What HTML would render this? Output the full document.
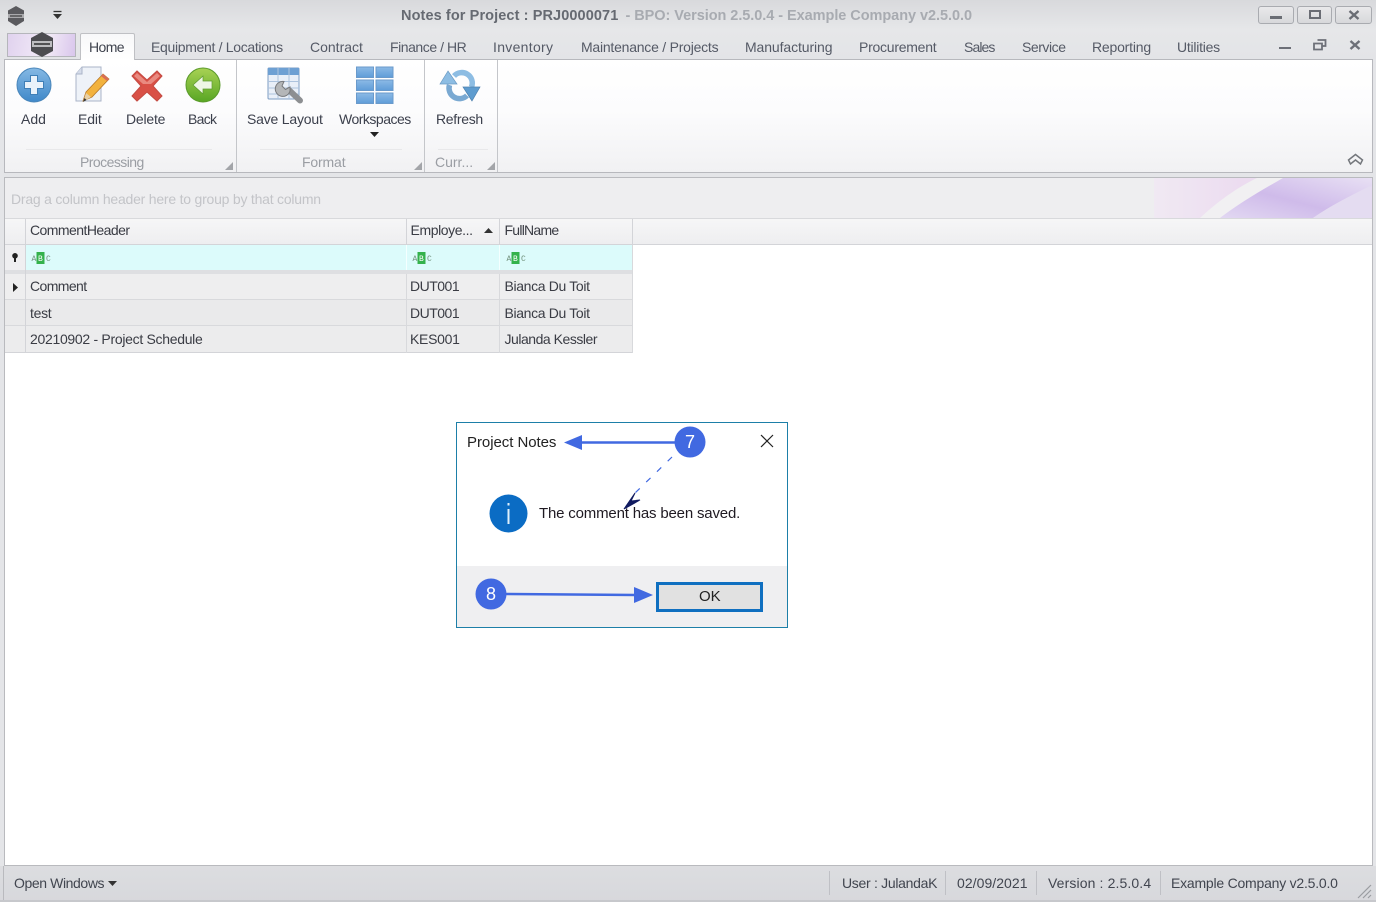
<!DOCTYPE html>
<html lang="en"><head><meta charset="utf-8"><title>Notes for Project</title>
<style>
html,body{margin:0;padding:0;width:1376px;height:902px;overflow:hidden;background:#e4e5e8}
body{position:relative;font-family:"Liberation Sans",sans-serif;font-size:14px;color:#3f4450}
.a{position:absolute}
.t{position:absolute;white-space:nowrap;line-height:18px;height:18px;filter:blur(.25px)}
.tab{color:#555a66;top:38px}
.rb{color:#3c404c;top:110px}
.gl{color:#9a9da3;top:153px}
.c{color:#3a3c44}
svg{position:absolute;overflow:visible}
.sep{position:absolute;background:#c4c6ca;width:1px}
</style></head><body>

<div class="a" style="left:0;top:0;width:1376px;height:59px;background:linear-gradient(#d8d9dc,#e6e7e9 50%,#e3e4e7)"></div>

<!-- app icon -->
<svg style="left:5px;top:5px" width="22" height="22" viewBox="0 0 22 22"><path d="M11 1 19 5.500V16L11 21 3 16V5.500Z" fill="#5a5a5e"/><rect x="3" y="9" width="16" height="4" fill="#a9a9ac"/><path d="M5 11h12" stroke="#3a3a3c" stroke-width="1.200"/></svg>
<svg style="left:52px;top:11px" width="11" height="9" viewBox="0 0 11 9"><path d="M1.500 0.500h8" stroke="#333" stroke-width="1.300"/><path d="M1 3h9L5.500 8Z" fill="#333"/></svg>

<div class="t" style="left:401px;top:7px;font-weight:bold;font-size:14.500px;color:#666a72;letter-spacing:.1px">Notes for Project : PRJ0000071 <span style="color:#a8abb1;font-weight:bold;padding-left:3px;letter-spacing:-.05px">- BPO: Version 2.5.0.4 - Example Company v2.5.0.0</span></div>

<!-- window buttons -->
<div class="a" style="left:1258px;top:6px;width:36px;height:18px;border:1px solid #a9abb0;border-radius:3px;box-sizing:border-box;background:linear-gradient(#e9e9eb,#d7d8db)"></div>
<div class="a" style="left:1297px;top:6px;width:35px;height:18px;border:1px solid #a9abb0;border-radius:3px;box-sizing:border-box;background:linear-gradient(#e9e9eb,#d7d8db)"></div>
<div class="a" style="left:1335px;top:6px;width:37px;height:18px;border:1px solid #a9abb0;border-radius:3px;box-sizing:border-box;background:linear-gradient(#e9e9eb,#d7d8db)"></div>
<div class="a" style="left:1270px;top:16px;width:12px;height:3px;background:#6a6d74"></div>
<div class="a" style="left:1309px;top:10px;width:12px;height:9px;border:2px solid #6a6d74;box-sizing:border-box"></div>
<svg style="left:1348px;top:10px" width="12" height="10" viewBox="0 0 12 10"><path d="M1.500 1 10.500 9M10.500 1 1.500 9" stroke="#6a6d74" stroke-width="2.400"/></svg>

<!-- app menu button -->
<div class="a" style="left:7px;top:33px;width:69px;height:24px;box-sizing:border-box;border:1px solid #b5b6bb;background:linear-gradient(100deg,#e0d2ee,#efe6f6 45%,#f1e9f6 60%,#d9c6ec)"></div>
<svg style="left:29px;top:31px" width="26" height="27" viewBox="0 0 26 27"><path d="M13 1 24 7V20L13 26 2 20V7Z" fill="#4c4c50"/><rect x="3" y="10" width="20" height="6" fill="#bdbdc0"/><path d="M5 13h16" stroke="#2e2e30" stroke-width="1.500"/></svg>

<!-- ribbon -->
<div class="a" style="left:4px;top:59px;width:1369px;height:114px;box-sizing:border-box;border:1px solid #b7b8bd;background:linear-gradient(#fff,#fcfcfd 45%,#f1f1f3)"></div>
<!-- home tab -->
<div class="a" style="left:80px;top:33px;width:55px;height:27px;box-sizing:border-box;border:1px solid #bfc0c4;border-bottom:0;background:linear-gradient(#f8f8f9,#fff);border-radius:2px 2px 0 0"></div>
<div class="t" style="left:89px;top:38px;color:#3f434e;letter-spacing:-.6px">Home</div>
<div class="t tab" style="left:151px;letter-spacing:-.32px">Equipment / Locations</div>
<div class="t tab" style="left:310px">Contract</div>
<div class="t tab" style="left:390px;letter-spacing:-.45px">Finance / HR</div>
<div class="t tab" style="left:493px;letter-spacing:.3px">Inventory</div>
<div class="t tab" style="left:581px;letter-spacing:-.23px">Maintenance / Projects</div>
<div class="t tab" style="left:745px;letter-spacing:-.1px">Manufacturing</div>
<div class="t tab" style="left:859px;letter-spacing:-.25px">Procurement</div>
<div class="t tab" style="left:964px;letter-spacing:-.9px">Sales</div>
<div class="t tab" style="left:1022px;letter-spacing:-.45px">Service</div>
<div class="t tab" style="left:1092px;letter-spacing:-.2px">Reporting</div>
<div class="t tab" style="left:1177px;letter-spacing:-.25px">Utilities</div>

<div class="a" style="left:1279px;top:47px;width:12px;height:2px;background:#6d7078"></div>
<svg style="left:1313px;top:39px" width="14" height="12" viewBox="0 0 14 12"><path d="M4.500 1h8v6h-3M1 4.500h8v6H1Z" fill="none" stroke="#6d7078" stroke-width="1.800"/></svg>
<svg style="left:1349px;top:40px" width="12" height="10" viewBox="0 0 12 10"><path d="M1.500 1 10.500 9M10.500 1 1.500 9" stroke="#6d7078" stroke-width="2.400"/></svg>

<!-- ribbon icons -->
<svg style="left:16px;top:67px" width="36" height="36" viewBox="0 0 36 36"><defs><linearGradient id="gb" x1="0" y1="0" x2="0" y2="1"><stop offset="0" stop-color="#85b9e4"/><stop offset="1" stop-color="#3f88c9"/></linearGradient></defs><circle cx="18" cy="18" r="17" fill="url(#gb)" stroke="#4a86ba"/><path d="M14.500 8.500h7v6h6v7h-6v6h-7v-6h-6v-7h6Z" fill="#e9f2fa" stroke="#3f7fb7"/></svg>

<svg style="left:74px;top:66px" width="36" height="39" viewBox="0 0 36 39"><path d="M8 1H27V35H2V8Z" fill="#eef2f8" stroke="#aab4c8"/><path d="M8 1V8H2" fill="#d5dcea" stroke="#aab4c8"/><path d="M9 35 12 26 29 8 35 13 18 31Z" fill="#f2b23e" stroke="#b7792a" stroke-width=".8"/><path d="M29 8 35 13 33 15 27 10Z" fill="#d96d55"/><path d="M9 36 12 27 17 31Z" fill="#e8d0a5"/><path d="M9 36 10.500 32 12.500 34Z" fill="#333"/></svg>

<svg style="left:130px;top:69px" width="34" height="34" viewBox="0 0 34 34"><path d="M2 7 7 2 17 11 27 2 32 7 23 17 32 27 27 32 17 23 7 32 2 27 11 17Z" fill="#d95046" stroke="#c44a42"/><path d="M4 7 7 4 17 13 27 4 30 7 21 15H13Z" fill="#e98a80"/></svg>

<svg style="left:185px;top:67px" width="36" height="36" viewBox="0 0 36 36"><defs><linearGradient id="gg" x1="0" y1="0" x2="0" y2="1"><stop offset="0" stop-color="#a8d254"/><stop offset="1" stop-color="#58a624"/></linearGradient></defs><circle cx="18" cy="18" r="17" fill="url(#gg)" stroke="#5a9a2b"/><path d="M8 18 18 9V14H27V22H18V27Z" fill="#eef6e4" stroke="#5d9a2f" stroke-width=".7"/></svg>

<svg style="left:267px;top:66px" width="38" height="39" viewBox="0 0 38 39"><rect x="1" y="2" width="31" height="31" rx="1" fill="#e9eff8" stroke="#7d9dc3"/><rect x="1" y="2" width="31" height="7" fill="#6ea0d3"/><path d="M1 15.500H32M1 22H32M1 28H32M11 2V33M22 2V33" stroke="#adc3dd"/><path d="M22 24 33 34.500" stroke="#8d8f92" stroke-width="6" stroke-linecap="round"/><path d="M23 25a7.500 7.500 0 1 1-6-9.500l-2 4.500 3.500 3.500 4.500-2.500z" fill="#b4b6b8" stroke="#77797c"/></svg>

<svg style="left:356px;top:66px" width="38" height="38" viewBox="0 0 38 38"><defs><linearGradient id="wb" x1="0" y1="0" x2="0" y2="1"><stop offset="0" stop-color="#8cbae6"/><stop offset="1" stop-color="#5f9cd8"/></linearGradient></defs><g fill="url(#wb)" stroke="#6a9acb"><rect x=".5" y="1" width="17" height="10.500"/><rect x="20" y="1" width="17" height="10.500"/><rect x=".5" y="14" width="17" height="10.500"/><rect x="20" y="14" width="17" height="10.500"/><rect x=".5" y="27" width="17" height="10.500"/><rect x="20" y="27" width="17" height="10.500"/></g></svg>

<svg style="left:440px;top:69px" width="41" height="34" viewBox="0 0 41 34"><path d="M27 26.500A10.500 10.500 0 0 1 9.500 16" fill="none" stroke="#7aa9d2" stroke-width="5.500"/><path d="M8 2 0 15H17Z" fill="#8dbde3" stroke="#6a9ac4" stroke-width=".7"/><path d="M14 7A10.500 10.500 0 0 1 31.500 18" fill="none" stroke="#8dbde3" stroke-width="5.500"/><path d="M32 32 23 18H40Z" fill="#5e9ccf" stroke="#4f82af" stroke-width=".7"/></svg>

<div class="t rb" style="left:21px">Add</div>
<div class="t rb" style="left:78px;letter-spacing:-.1px">Edit</div>
<div class="t rb" style="left:126px;letter-spacing:-.2px">Delete</div>
<div class="t rb" style="left:188px;letter-spacing:-.7px">Back</div>
<div class="t rb" style="left:247px;letter-spacing:-.2px">Save Layout</div>
<div class="t rb" style="left:339px;letter-spacing:-.5px">Workspaces</div>
<div class="t rb" style="left:436px;letter-spacing:-.3px">Refresh</div>
<svg style="left:370px;top:132px" width="9" height="5" viewBox="0 0 9 5"><path d="M0 0H9L4.500 5Z" fill="#222"/></svg>

<div class="a" style="left:26px;top:149px;width:186px;height:1px;background:#e8e8ea"></div>
<div class="a" style="left:260px;top:149px;width:142px;height:1px;background:#e8e8ea"></div>
<div class="a" style="left:438px;top:149px;width:50px;height:1px;background:#e8e8ea"></div>
<div class="t gl" style="left:80px;letter-spacing:-.55px">Processing</div>
<div class="t gl" style="left:302px;letter-spacing:-.15px">Format</div>
<div class="t gl" style="left:435px">Curr...</div>
<div class="sep" style="left:236px;top:60px;height:112px"></div>
<div class="sep" style="left:424px;top:60px;height:112px"></div>
<div class="sep" style="left:497px;top:60px;height:112px"></div>
<svg style="left:225px;top:162px" width="8" height="8"><path d="M8 0V8H0Z" fill="#a3a5a9"/></svg>
<svg style="left:414px;top:162px" width="8" height="8"><path d="M8 0V8H0Z" fill="#a3a5a9"/></svg>
<svg style="left:487px;top:162px" width="8" height="8"><path d="M8 0V8H0Z" fill="#a3a5a9"/></svg>
<svg style="left:1347px;top:153px" width="17" height="13" viewBox="0 0 17 13"><path d="M1.500 7 8.500 1.500 15.500 7 13.500 11 8.500 7 3.500 11Z" fill="none" stroke="#74777c" stroke-width="1.500"/></svg>

<!-- main panel -->
<div class="a" style="left:4px;top:177px;width:1369px;height:689px;box-sizing:border-box;border:1px solid #b9babe;background:#fff"></div>
<div class="a" style="left:5px;top:178px;width:1367px;height:41px;background:#eeeef0;border-bottom:1px solid #d8d9dc;box-sizing:border-box"></div>
<svg style="left:1154px;top:178px" width="218" height="40" viewBox="0 0 218 40"><defs><linearGradient id="p1" x1="0" y1="0" x2="1" y2="0"><stop offset="0" stop-color="#f0e9f3"/><stop offset=".4" stop-color="#ecdcf0"/><stop offset="1" stop-color="#e6dcf2"/></linearGradient><linearGradient id="p2" x1="0" y1="1" x2="1" y2="0"><stop offset="0" stop-color="#e2d8f2"/><stop offset=".45" stop-color="#cfbbea"/><stop offset="1" stop-color="#e8e0f4"/></linearGradient></defs><rect width="218" height="40" fill="url(#p1)"/><path d="M46 40C62 25 82 10 103 0H129C108 12 84 26 66 40Z" fill="#f1f0f2"/><path d="M66 40C84 26 108 12 129 0H218V8C196 18 176 28 159 40Z" fill="url(#p2)"/><path d="M159 40C176 28 196 18 216 8V40Z" fill="#e4dcf1"/></svg>
<div class="t" style="left:11px;top:190px;color:#c3c4c8;letter-spacing:-.22px">Drag a column header here to group by that column</div>

<!-- header -->
<div class="a" style="left:5px;top:219px;width:1367px;height:26px;background:linear-gradient(#f6f6f7,#eeeef0);border-bottom:1px solid #d3d4d8;box-sizing:border-box"></div>
<div class="sep" style="left:25px;top:219px;height:133px;background:#d3d4d8"></div>
<div class="sep" style="left:406px;top:219px;height:133px;background:#d3d4d8"></div>
<div class="sep" style="left:499px;top:219px;height:133px;background:#d3d4d8"></div>
<div class="sep" style="left:632px;top:219px;height:133px;background:#d3d4d8"></div>
<div class="t c" style="left:30px;top:221px;letter-spacing:-.55px">CommentHeader</div>
<div class="t c" style="left:410.500px;top:221px;letter-spacing:-.4px">Employe...</div>
<svg style="left:484px;top:228px" width="9" height="5"><path d="M0 5H9L4.500 0Z" fill="#333"/></svg>
<div class="t c" style="left:504.500px;top:221px;letter-spacing:-.75px">FullName</div>

<!-- filter row -->
<div class="a" style="left:26px;top:245px;width:606px;height:25px;background:#dcfbfb"></div>
<div class="a" style="left:5px;top:245px;width:20px;height:25px;background:#efeff1"></div>
<div class="a" style="left:5px;top:270px;width:627px;height:4px;background:#dedfe2"></div>
<div class="sep" style="left:406px;top:245px;height:25px;background:#f4ffff"></div>
<div class="sep" style="left:499px;top:245px;height:25px;background:#f4ffff"></div>
<svg style="left:11px;top:253px" width="8" height="9" viewBox="0 0 8 9"><circle cx="4" cy="2.800" r="2.800" fill="#222"/><rect x="3" y="4" width="2" height="5" fill="#222"/></svg>
<svg style="left:31px;top:252px" width="20" height="12" viewBox="0 0 20 12"><rect x="5.500" y="0" width="8" height="12" fill="#34b24c"/><text x="0.500" y="9" font-size="8" fill="#6f8f7a" font-family="Liberation Mono">A</text><text x="7" y="9" font-size="8" fill="#fff" font-family="Liberation Mono">B</text><text x="15" y="9" font-size="8" fill="#6f8f7a" font-family="Liberation Mono">C</text></svg>
<svg style="left:412px;top:252px" width="20" height="12" viewBox="0 0 20 12"><rect x="5.500" y="0" width="8" height="12" fill="#34b24c"/><text x="0.500" y="9" font-size="8" fill="#6f8f7a" font-family="Liberation Mono">A</text><text x="7" y="9" font-size="8" fill="#fff" font-family="Liberation Mono">B</text><text x="15" y="9" font-size="8" fill="#6f8f7a" font-family="Liberation Mono">C</text></svg>
<svg style="left:506px;top:252px" width="20" height="12" viewBox="0 0 20 12"><rect x="5.500" y="0" width="8" height="12" fill="#34b24c"/><text x="0.500" y="9" font-size="8" fill="#6f8f7a" font-family="Liberation Mono">A</text><text x="7" y="9" font-size="8" fill="#fff" font-family="Liberation Mono">B</text><text x="15" y="9" font-size="8" fill="#6f8f7a" font-family="Liberation Mono">C</text></svg>

<!-- rows -->
<div class="a" style="left:5px;top:274px;width:627px;height:26px;background:#eeeeef;border-bottom:1px solid #d8d9dc;box-sizing:border-box"></div>
<div class="a" style="left:5px;top:300px;width:627px;height:26px;background:#eaeaeb;border-bottom:1px solid #d8d9dc;box-sizing:border-box"></div>
<div class="a" style="left:5px;top:326px;width:627px;height:27px;background:#ececed;border-bottom:1px solid #d3d4d8;box-sizing:border-box"></div>
<div class="sep" style="left:25px;top:245px;height:108px;background:#d3d4d8"></div>
<div class="sep" style="left:406px;top:274px;height:79px;background:#d8d9dc"></div>
<div class="sep" style="left:499px;top:274px;height:79px;background:#d8d9dc"></div>
<div class="sep" style="left:632px;top:245px;height:108px;background:#d8d9dc"></div>
<svg style="left:13px;top:283px" width="5" height="9"><path d="M0 0 5 4.500 0 9Z" fill="#222"/></svg>
<div class="t c" style="left:30px;top:277px;letter-spacing:-.6px">Comment</div>
<div class="t c" style="left:410px;top:277px;letter-spacing:-.5px">DUT001</div>
<div class="t c" style="left:504.500px;top:277px;letter-spacing:-.35px">Bianca Du Toit</div>
<div class="t c" style="left:30px;top:304px;letter-spacing:-.3px">test</div>
<div class="t c" style="left:410px;top:304px;letter-spacing:-.5px">DUT001</div>
<div class="t c" style="left:504.500px;top:304px;letter-spacing:-.35px">Bianca Du Toit</div>
<div class="t c" style="left:30px;top:330px;letter-spacing:-.3px">20210902 - Project Schedule</div>
<div class="t c" style="left:410px;top:330px;letter-spacing:-.3px">KES001</div>
<div class="t c" style="left:504.500px;top:330px;letter-spacing:-.47px">Julanda Kessler</div>

<!-- status bar -->
<div class="a" style="left:0;top:866px;width:1376px;height:36px;background:linear-gradient(#dcdde0,#d7d8dc)"></div>
<div class="a" style="left:3px;top:866px;width:1px;height:34px;background:#b9babe"></div>
<div class="a" style="left:0;top:900px;width:1376px;height:2px;background:#c7c8cc"></div>
<div class="t" style="left:14px;top:874px;color:#41454f;letter-spacing:-.4px">Open Windows</div>
<svg style="left:108px;top:881px" width="9" height="5"><path d="M0 0H9L4.500 5Z" fill="#333"/></svg>
<div class="sep" style="left:829px;top:871px;height:24px;background:#bfc0c5"></div>
<div class="sep" style="left:945px;top:871px;height:24px;background:#bfc0c5"></div>
<div class="sep" style="left:1036px;top:871px;height:24px;background:#bfc0c5"></div>
<div class="sep" style="left:1160px;top:871px;height:24px;background:#bfc0c5"></div>
<div class="t" style="left:842px;top:874px;color:#41454f;letter-spacing:-.3px">User : JulandaK</div>
<div class="t" style="left:957px;top:874px;color:#41454f;letter-spacing:.05px">02/09/2021</div>
<div class="t" style="left:1048px;top:874px;color:#41454f;letter-spacing:.12px">Version : 2.5.0.4</div>
<div class="t" style="left:1171px;top:874px;color:#41454f;letter-spacing:-.22px">Example Company v2.5.0.0</div>
<svg style="left:1357px;top:884px" width="15" height="14"><path d="M1 14 14 1M6 14 14 6M11 14 14 11" stroke="#9a9ca1" stroke-width="1.200"/></svg>

<!-- dialog -->
<div class="a" style="left:456px;top:422px;width:332px;height:206px;box-sizing:border-box;border:1px solid #1d7fa8;background:#fff"></div>
<div class="a" style="left:457px;top:566px;width:330px;height:61px;background:#efeff1"></div>
<div class="t" style="left:467px;top:434px;font-size:15px;color:#222;letter-spacing:-.05px">Project Notes</div>
<svg style="left:760px;top:434px" width="14" height="14"><path d="M1 1 13 13M13 1 1 13" stroke="#222" stroke-width="1.200"/></svg>
<svg style="left:489px;top:494px" width="39" height="39" viewBox="0 0 39 39"><circle cx="19.500" cy="19.500" r="19" fill="#0b6cc4"/><rect x="18.500" y="15" width="2" height="15" fill="#dff0fb"/><rect x="18.500" y="9" width="2" height="2.500" fill="#dff0fb"/></svg>
<div class="t" style="left:539px;top:505px;font-size:15px;color:#1f1a22;letter-spacing:-.18px">The comment has been saved.</div>
<div class="a" style="left:656px;top:582px;width:107px;height:30px;box-sizing:border-box;border:3px solid #0f6fc0;background:#e1e1e1"></div>
<div class="t" style="left:699px;top:588px;font-size:15px;color:#222">OK</div>

<!-- annotations -->
<svg style="left:456px;top:422px" width="332" height="206" viewBox="0 0 332 206">
<path d="M125 20.500H224" stroke="#4169e1" stroke-width="2.500"/>
<path d="M108 20.500 126 13V28Z" fill="#4169e1"/>
<path d="M216 35 178 72" stroke="#4169e1" stroke-width="1.200" stroke-dasharray="6 9"/>
<path d="M168 87 179 71 175 79 184 78Z" fill="#101a60" stroke="#101a60"/>
<circle cx="234" cy="20" r="15.500" fill="#4169e1"/>
<text x="234" y="26" text-anchor="middle" font-size="18" fill="#fff" font-family="Liberation Sans">7</text>
<path d="M48 172 180 173" stroke="#4169e1" stroke-width="2.500"/>
<path d="M197 173 178 165V181Z" fill="#4169e1"/>
<circle cx="35" cy="172" r="15.500" fill="#4169e1"/>
<text x="35" y="178" text-anchor="middle" font-size="18" fill="#fff" font-family="Liberation Sans">8</text>
</svg>
</body></html>
